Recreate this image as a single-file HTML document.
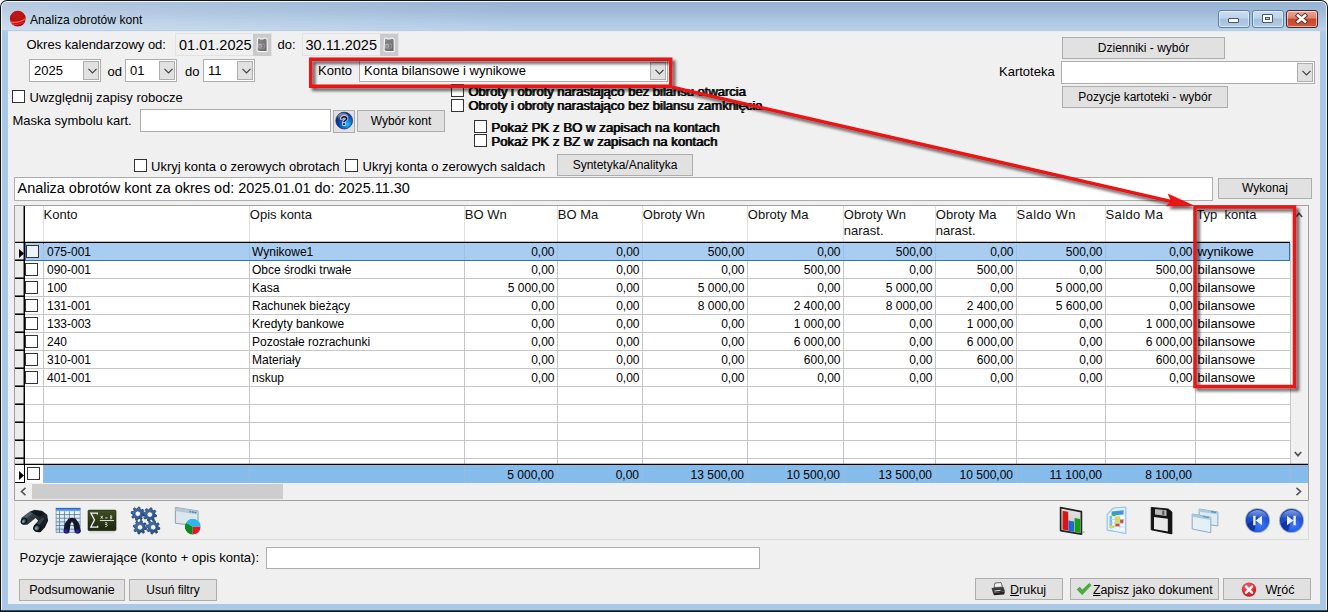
<!DOCTYPE html>
<html><head><meta charset="utf-8"><title>Analiza obrotów kont</title>
<style>
html,body{margin:0;padding:0;background:#fff;}
body{width:1328px;height:612px;position:relative;overflow:hidden;font-family:"Liberation Sans",sans-serif;font-size:13px;color:#000;}
div{position:absolute;box-sizing:border-box;}
.t{white-space:nowrap;}
.btn{background:#e1e1e1;border:1px solid #adadad;text-align:center;white-space:nowrap;color:#000;}
.cb{background:#fff;border:1px solid #333;}
.combo{background:#fff;border:1px solid #adadad;white-space:nowrap;}
.dd{background:#e1e1e1;border:1px solid #adadad;}
.inp{background:#fff;border:1px solid #adadad;}
.bold{text-shadow:0.7px 0 0 #000;}
</style></head><body>

<div style="left:0;top:0;width:1328px;height:612px;background:#141414;border-radius:7px 7px 0 0;"></div>
<div style="left:1px;top:1px;width:1326px;height:610px;background:#f2f7fc;border-radius:6px 6px 0 0;"></div>
<div style="left:2px;top:2px;width:1324px;height:608px;border-radius:5px 5px 0 0;background:linear-gradient(to bottom,#97b3d3 0px,#9ebad8 9px,#adc7e3 19px,#b8d0e8 27px,#bcd0e4 28px,#aac9e9 31px,#aac9e9 100%);"></div>
<div style="left:2px;top:2px;width:520px;height:28px;border-radius:5px 0 0 0;background:linear-gradient(to right,rgba(255,255,255,.30) 0px,rgba(255,255,255,.22) 120px,rgba(255,255,255,0) 520px);"></div>
<div style="left:1px;top:610px;width:1326px;height:1px;background:#2c5566;"></div>
<div style="left:8px;top:31px;width:1312px;height:573px;background:#f0f0f0;border-top:1px solid #e4eef8;"></div>
<svg style="position:absolute;left:9px;top:10px" width="18" height="18" viewBox="0 0 18 18"><defs><radialGradient id="rg" cx="45%" cy="30%" r="75%"><stop offset="0" stop-color="#c81515"/><stop offset="1" stop-color="#a80d0d"/></radialGradient></defs><circle cx="8.8" cy="8.6" r="7.9" fill="url(#rg)"/><path d="M1.6 11.2 C5 12.2 11 11.6 16.4 8.2 L16.6 9.6 C12 12.6 6 13.8 2.4 13.2 Z" fill="#ff5a5a"/><path d="M2.8 13.6 C6 14.4 11 13.6 15.2 11.4 L14.4 12.8 C11 14.8 7 15.4 4.2 15 Z" fill="#e33" opacity=".8"/></svg>
<div class="t" style="left:30px;top:14.05px;font-size:12.1px;line-height:13.90px;color:#000;">Analiza obrotów kont</div>
<div style="left:1218px;top:10px;width:32px;height:18px;border:1px solid #5b7fa6;border-radius:3px;background:linear-gradient(to bottom,#cbddf0 0%,#bdd2e9 45%,#a4bfdc 50%,#b4cce6 100%);box-shadow:inset 0 0 0 1px rgba(255,255,255,.55)"></div>
<div style="left:1252px;top:10px;width:32px;height:18px;border:1px solid #5b7fa6;border-radius:3px;background:linear-gradient(to bottom,#cbddf0 0%,#bdd2e9 45%,#a4bfdc 50%,#b4cce6 100%);box-shadow:inset 0 0 0 1px rgba(255,255,255,.55)"></div>
<div style="left:1286px;top:10px;width:32px;height:18px;border:1px solid #4d2423;border-radius:3px;background:linear-gradient(to bottom,#e9a99b 0%,#dd8270 45%,#c9452b 50%,#cf5a3f 100%);box-shadow:inset 0 0 0 1px rgba(255,255,255,.55)"></div>
<div style="left:1228px;top:18px;width:11px;height:5px;background:#fff;border:1px solid #44566b;border-radius:1px"></div>
<div style="left:1262px;top:14px;width:11px;height:9px;background:#fff;border:1px solid #44566b;border-radius:1px"></div>
<div style="left:1265px;top:17px;width:5px;height:3px;background:#b4cce6;border:1px solid #44566b"></div>
<svg style="position:absolute;left:1295px;top:13px" width="13" height="11" viewBox="0 0 13 11"><path d="M3 2.6 L10 8.6 M10 2.6 L3 8.6" stroke="#53302a" stroke-width="4.4" stroke-linecap="square"/><path d="M3 2.6 L10 8.6 M10 2.6 L3 8.6" stroke="#fff" stroke-width="2.6" stroke-linecap="square"/></svg>
<div class="t" style="left:26.5px;top:37.93px;font-size:13px;line-height:14.94px;color:#000;">Okres kalendarzowy od:</div>
<div style="left:175px;top:33px;width:97px;height:23px;border:1px solid #e2e2e2;background:#f0f0f0;"></div>
<div class="t" style="left:179px;top:37.18px;font-size:14.5px;line-height:16.66px;color:#000;">01.01.2025</div>
<div style="left:253px;top:34px;width:18px;height:22px;background:#cacaca;"><svg width="18" height="22" viewBox="0 0 18 22" style="position:absolute;left:0;top:0"><defs><linearGradient id="cg253" x1="0" y1="0" x2="1" y2="1"><stop offset="0" stop-color="#8c8c8c"/><stop offset="1" stop-color="#666"/></linearGradient></defs><path d="M4.6 4.4 L6.6 4 L7.4 4.8 L10.2 4.8 L11 4 L13 4.4 L14.2 5.6 L14.2 17.6 L6.2 17.6 L4 16.6 Z" fill="url(#cg253)" stroke="#f3f3f3" stroke-width="1.2" stroke-linejoin="round"/><rect x="5.4" y="9.8" width="6" height="4.6" fill="#b9b9b9"/><path d="M7 10.8 v3 M8.6 10.8 h1.8 v1.2 h-1.6 M8.6 13.6 h1.8 v-1.4" stroke="#555" stroke-width=".8" fill="none"/></svg></div>
<div class="t" style="left:277.5px;top:37.93px;font-size:13px;line-height:14.94px;color:#000;">do:</div>
<div style="left:302px;top:33px;width:97px;height:23px;border:1px solid #e2e2e2;background:#f0f0f0;"></div>
<div class="t" style="left:305.5px;top:37.18px;font-size:14.5px;line-height:16.66px;color:#000;">30.11.2025</div>
<div style="left:380px;top:34px;width:18px;height:22px;background:#cacaca;"><svg width="18" height="22" viewBox="0 0 18 22" style="position:absolute;left:0;top:0"><defs><linearGradient id="cg380" x1="0" y1="0" x2="1" y2="1"><stop offset="0" stop-color="#8c8c8c"/><stop offset="1" stop-color="#666"/></linearGradient></defs><path d="M4.6 4.4 L6.6 4 L7.4 4.8 L10.2 4.8 L11 4 L13 4.4 L14.2 5.6 L14.2 17.6 L6.2 17.6 L4 16.6 Z" fill="url(#cg380)" stroke="#f3f3f3" stroke-width="1.2" stroke-linejoin="round"/><rect x="5.4" y="9.8" width="6" height="4.6" fill="#b9b9b9"/><path d="M7 10.8 v3 M8.6 10.8 h1.8 v1.2 h-1.6 M8.6 13.6 h1.8 v-1.4" stroke="#555" stroke-width=".8" fill="none"/></svg></div>
<div class="combo" style="left:29px;top:59px;width:72px;height:23px"><span style="position:absolute;left:4px;top:0px;line-height:21px;font-size:13px">2025</span><div class="dd" style="right:1px;top:1px;width:16px;height:19px"><svg width="9" height="6" viewBox="0 0 9 6" style="position:absolute;left:3.5px;top:6px"><path d="M0.5 0.8 L4.5 4.8 L8.5 0.8" fill="none" stroke="#404040" stroke-width="1.2"/></svg></div></div>
<div class="t" style="left:107.5px;top:64.93px;font-size:13px;line-height:14.94px;color:#000;">od</div>
<div class="combo" style="left:125px;top:59px;width:52px;height:23px"><span style="position:absolute;left:4px;top:0px;line-height:21px;font-size:13px">01</span><div class="dd" style="right:1px;top:1px;width:16px;height:19px"><svg width="9" height="6" viewBox="0 0 9 6" style="position:absolute;left:3.5px;top:6px"><path d="M0.5 0.8 L4.5 4.8 L8.5 0.8" fill="none" stroke="#404040" stroke-width="1.2"/></svg></div></div>
<div class="t" style="left:185px;top:64.93px;font-size:13px;line-height:14.94px;color:#000;">do</div>
<div class="combo" style="left:203px;top:59px;width:52px;height:23px"><span style="position:absolute;left:4px;top:0px;line-height:21px;font-size:13px">11</span><div class="dd" style="right:1px;top:1px;width:16px;height:19px"><svg width="9" height="6" viewBox="0 0 9 6" style="position:absolute;left:3.5px;top:6px"><path d="M0.5 0.8 L4.5 4.8 L8.5 0.8" fill="none" stroke="#404040" stroke-width="1.2"/></svg></div></div>
<div class="t" style="left:318px;top:63.53px;font-size:13px;line-height:14.94px;color:#000;">Konto</div>
<div class="combo" style="left:359px;top:60px;width:309px;height:22px"><span style="position:absolute;left:4px;top:0px;line-height:20px;font-size:13px">Konta bilansowe i wynikowe</span><div class="dd" style="right:1px;top:1px;width:16px;height:18px"><svg width="9" height="6" viewBox="0 0 9 6" style="position:absolute;left:3.5px;top:6px"><path d="M0.5 0.8 L4.5 4.8 L8.5 0.8" fill="none" stroke="#404040" stroke-width="1.2"/></svg></div></div>
<div class="btn" style="left:1062px;top:37px;width:163px;height:22px;font-size:12px;line-height:20px;letter-spacing:0px">Dzienniki - wybór</div>
<div class="t" style="left:999px;top:64.93px;font-size:13px;line-height:14.94px;color:#000;">Kartoteka</div>
<div class="combo" style="left:1061px;top:61px;width:254px;height:23px"><span style="position:absolute;left:5px;top:0px;line-height:21px;font-size:13px"></span><div class="dd" style="right:1px;top:1px;width:16px;height:19px"><svg width="9" height="6" viewBox="0 0 9 6" style="position:absolute;left:3.5px;top:6px"><path d="M0.5 0.8 L4.5 4.8 L8.5 0.8" fill="none" stroke="#404040" stroke-width="1.2"/></svg></div></div>
<div class="btn" style="left:1062px;top:86px;width:166px;height:22px;font-size:12px;line-height:20px;letter-spacing:0px">Pozycje kartoteki - wybór</div>
<div class="cb" style="left:12px;top:90px;width:13px;height:13px"></div>
<div class="t" style="left:29.5px;top:90.93px;font-size:13px;line-height:14.94px;color:#000;">Uwzględnij zapisy robocze</div>
<div class="t" style="left:12.5px;top:113.93px;font-size:13px;line-height:14.94px;color:#000;">Maska symbolu kart.</div>
<div class="inp" style="left:140px;top:109px;width:191px;height:23px;"></div>
<div style="left:333px;top:110px;width:22px;height:23px;background:#e1e1e1;border:1px solid #adadad;"><svg width="20" height="21" viewBox="0 0 20 21" style="position:absolute;left:0;top:0"><defs><radialGradient id="hg" cx="68%" cy="72%" r="70%"><stop offset="0" stop-color="#22c4f4"/><stop offset=".35" stop-color="#1478d8"/><stop offset=".75" stop-color="#0b3ca4"/><stop offset="1" stop-color="#0a2a78"/></radialGradient><linearGradient id="hl" x1="0" y1="0" x2="0" y2="1"><stop offset="0" stop-color="#fff" stop-opacity=".55"/><stop offset="1" stop-color="#fff" stop-opacity="0"/></linearGradient></defs><circle cx="10.2" cy="9.6" r="8.4" fill="url(#hg)" stroke="#10245c" stroke-width=".7"/><ellipse cx="9" cy="6" rx="5.6" ry="3.8" fill="url(#hl)"/><text x="10.3" y="14.2" font-family="Liberation Sans" font-weight="bold" font-size="13" text-anchor="middle" fill="#fff" stroke="#fff" stroke-width="1.6" opacity=".8">?</text><text x="10.3" y="14.2" font-family="Liberation Sans" font-weight="bold" font-size="13" text-anchor="middle" fill="#0c0c1c">?</text></svg></div>
<div class="btn" style="left:357px;top:110px;width:88px;height:22px;font-size:12px;line-height:20px;letter-spacing:0px">Wybór kont</div>
<div class="cb" style="left:451px;top:84px;width:13px;height:13px"></div>
<div class="t" style="left:468px;top:84.93px;font-size:13px;line-height:14.94px;color:#000;text-shadow:1px 0 0 #000;">Obroty i obroty narastająco bez bilansu otwarcia</div>
<div class="cb" style="left:451px;top:99px;width:13px;height:13px"></div>
<div class="t" style="left:468px;top:99.43px;font-size:13px;line-height:14.94px;color:#000;text-shadow:1px 0 0 #000;">Obroty i obroty narastająco bez bilansu zamknięcia</div>
<div class="cb" style="left:474px;top:120px;width:13px;height:13px"></div>
<div class="t" style="left:491px;top:120.93px;font-size:13px;line-height:14.94px;color:#000;text-shadow:1px 0 0 #000;letter-spacing:.1px;">Pokaż PK z BO w zapisach na kontach</div>
<div class="cb" style="left:474px;top:134px;width:13px;height:13px"></div>
<div class="t" style="left:491px;top:134.93px;font-size:13px;line-height:14.94px;color:#000;text-shadow:1px 0 0 #000;letter-spacing:.1px;">Pokaż PK z BZ w zapisach na kontach</div>
<div class="cb" style="left:134px;top:159px;width:13px;height:13px"></div>
<div class="t" style="left:151px;top:159.93px;font-size:13px;line-height:14.94px;color:#000;">Ukryj konta o zerowych obrotach</div>
<div class="cb" style="left:345px;top:159px;width:13px;height:13px"></div>
<div class="t" style="left:362.5px;top:159.93px;font-size:13px;line-height:14.94px;color:#000;">Ukryj konta o zerowych saldach</div>
<div class="btn" style="left:557px;top:154px;width:136px;height:22px;font-size:12px;line-height:20px;letter-spacing:0px">Syntetyka/Analityka</div>
<div class="inp" style="left:14px;top:177px;width:1199px;height:24px;"></div>
<div class="t" style="left:17.5px;top:180.12px;font-size:14.45px;line-height:16.60px;color:#000;">Analiza obrotów kont za okres od: 2025.01.01 do: 2025.11.30</div>
<div class="btn" style="left:1218px;top:178px;width:94px;height:21px;font-size:12px;line-height:19px;letter-spacing:0px">Wykonaj</div>
<div style="left:14px;top:205px;width:1295px;height:296px;background:#fff;border:1px solid #a0a0a0;"></div>
<div style="left:15px;top:206px;width:9px;height:258px;background:#ececec;"></div>
<div style="left:43px;top:206px;width:1px;height:36px;background:#e0e0e0;"></div>
<div style="left:249px;top:206px;width:1px;height:36px;background:#e0e0e0;"></div>
<div style="left:464px;top:206px;width:1px;height:36px;background:#e0e0e0;"></div>
<div style="left:557px;top:206px;width:1px;height:36px;background:#e0e0e0;"></div>
<div style="left:642px;top:206px;width:1px;height:36px;background:#e0e0e0;"></div>
<div style="left:747px;top:206px;width:1px;height:36px;background:#e0e0e0;"></div>
<div style="left:843px;top:206px;width:1px;height:36px;background:#e0e0e0;"></div>
<div style="left:935px;top:206px;width:1px;height:36px;background:#e0e0e0;"></div>
<div style="left:1016px;top:206px;width:1px;height:36px;background:#e0e0e0;"></div>
<div style="left:1105px;top:206px;width:1px;height:36px;background:#e0e0e0;"></div>
<div style="left:1195px;top:206px;width:1px;height:36px;background:#e0e0e0;"></div>
<div style="left:43px;top:243px;width:1px;height:221px;background:#c6c6c6;"></div>
<div style="left:249px;top:243px;width:1px;height:221px;background:#c6c6c6;"></div>
<div style="left:464px;top:243px;width:1px;height:221px;background:#c6c6c6;"></div>
<div style="left:557px;top:243px;width:1px;height:221px;background:#c6c6c6;"></div>
<div style="left:642px;top:243px;width:1px;height:221px;background:#c6c6c6;"></div>
<div style="left:747px;top:243px;width:1px;height:221px;background:#c6c6c6;"></div>
<div style="left:843px;top:243px;width:1px;height:221px;background:#c6c6c6;"></div>
<div style="left:935px;top:243px;width:1px;height:221px;background:#c6c6c6;"></div>
<div style="left:1016px;top:243px;width:1px;height:221px;background:#c6c6c6;"></div>
<div style="left:1105px;top:243px;width:1px;height:221px;background:#c6c6c6;"></div>
<div style="left:1195px;top:243px;width:1px;height:221px;background:#c6c6c6;"></div>
<div style="left:1290px;top:243px;width:1px;height:221px;background:#c6c6c6;"></div>
<div style="left:1291px;top:206px;width:17px;height:258px;background:#f0f0f0;"></div>
<div style="left:25px;top:260px;width:1265px;height:1px;background:#c6c6c6;"></div>
<div style="left:15px;top:260px;width:10px;height:1px;background:#000;box-shadow:0 -0.5px 0 #555;"></div>
<div style="left:15px;top:259px;width:10px;height:1px;background:rgba(0,0,0,.35);"></div>
<div style="left:25px;top:278px;width:1265px;height:1px;background:#c6c6c6;"></div>
<div style="left:15px;top:278px;width:10px;height:1px;background:#000;box-shadow:0 -0.5px 0 #555;"></div>
<div style="left:15px;top:277px;width:10px;height:1px;background:rgba(0,0,0,.35);"></div>
<div style="left:25px;top:296px;width:1265px;height:1px;background:#c6c6c6;"></div>
<div style="left:15px;top:296px;width:10px;height:1px;background:#000;box-shadow:0 -0.5px 0 #555;"></div>
<div style="left:15px;top:295px;width:10px;height:1px;background:rgba(0,0,0,.35);"></div>
<div style="left:25px;top:314px;width:1265px;height:1px;background:#c6c6c6;"></div>
<div style="left:15px;top:314px;width:10px;height:1px;background:#000;box-shadow:0 -0.5px 0 #555;"></div>
<div style="left:15px;top:313px;width:10px;height:1px;background:rgba(0,0,0,.35);"></div>
<div style="left:25px;top:332px;width:1265px;height:1px;background:#c6c6c6;"></div>
<div style="left:15px;top:332px;width:10px;height:1px;background:#000;box-shadow:0 -0.5px 0 #555;"></div>
<div style="left:15px;top:331px;width:10px;height:1px;background:rgba(0,0,0,.35);"></div>
<div style="left:25px;top:350px;width:1265px;height:1px;background:#c6c6c6;"></div>
<div style="left:15px;top:350px;width:10px;height:1px;background:#000;box-shadow:0 -0.5px 0 #555;"></div>
<div style="left:15px;top:349px;width:10px;height:1px;background:rgba(0,0,0,.35);"></div>
<div style="left:25px;top:368px;width:1265px;height:1px;background:#c6c6c6;"></div>
<div style="left:15px;top:368px;width:10px;height:1px;background:#000;box-shadow:0 -0.5px 0 #555;"></div>
<div style="left:15px;top:367px;width:10px;height:1px;background:rgba(0,0,0,.35);"></div>
<div style="left:25px;top:386px;width:1265px;height:1px;background:#c6c6c6;"></div>
<div style="left:15px;top:386px;width:10px;height:1px;background:#000;box-shadow:0 -0.5px 0 #555;"></div>
<div style="left:15px;top:385px;width:10px;height:1px;background:rgba(0,0,0,.35);"></div>
<div style="left:25px;top:404px;width:1265px;height:1px;background:#c6c6c6;"></div>
<div style="left:15px;top:404px;width:10px;height:1px;background:#000;box-shadow:0 -0.5px 0 #555;"></div>
<div style="left:15px;top:403px;width:10px;height:1px;background:rgba(0,0,0,.35);"></div>
<div style="left:25px;top:422px;width:1265px;height:1px;background:#c6c6c6;"></div>
<div style="left:15px;top:422px;width:10px;height:1px;background:#000;box-shadow:0 -0.5px 0 #555;"></div>
<div style="left:15px;top:421px;width:10px;height:1px;background:rgba(0,0,0,.35);"></div>
<div style="left:25px;top:440px;width:1265px;height:1px;background:#c6c6c6;"></div>
<div style="left:15px;top:440px;width:10px;height:1px;background:#000;box-shadow:0 -0.5px 0 #555;"></div>
<div style="left:15px;top:439px;width:10px;height:1px;background:rgba(0,0,0,.35);"></div>
<div style="left:25px;top:458px;width:1265px;height:1px;background:#c6c6c6;"></div>
<div style="left:15px;top:458px;width:10px;height:1px;background:#000;box-shadow:0 -0.5px 0 #555;"></div>
<div style="left:15px;top:457px;width:10px;height:1px;background:rgba(0,0,0,.35);"></div>
<div style="left:23px;top:206px;width:1px;height:258px;background:rgba(0,0,0,.45);"></div>
<div style="left:24px;top:206px;width:1px;height:258px;background:#000;"></div>
<div style="left:15px;top:241px;width:1275px;height:1px;background:rgba(0,0,0,.25);"></div>
<div style="left:15px;top:242px;width:1275px;height:1px;background:#000;"></div>
<div class="t" style="left:43.6px;top:207px;font-size:13px;line-height:16px;color:#111;">Konto</div>
<div class="t" style="left:249.8px;top:207px;font-size:13px;line-height:16px;color:#111;">Opis konta</div>
<div class="t" style="left:464.8px;top:207px;font-size:13px;line-height:16px;color:#111;">BO Wn</div>
<div class="t" style="left:557.8px;top:207px;font-size:13px;line-height:16px;color:#111;">BO Ma</div>
<div class="t" style="left:642.8px;top:207px;font-size:13px;line-height:16px;color:#111;">Obroty Wn</div>
<div class="t" style="left:747.8px;top:207px;font-size:13px;line-height:16px;color:#111;">Obroty Ma</div>
<div class="t" style="left:843.8px;top:207px;font-size:13px;line-height:16px;color:#111;">Obroty Wn<br>narast.</div>
<div class="t" style="left:935.8px;top:207px;font-size:13px;line-height:16px;color:#111;">Obroty Ma<br>narast.</div>
<div class="t" style="left:1016.6px;top:207px;font-size:13px;line-height:16px;color:#111;"><span style="letter-spacing:.35px">Saldo Wn</span></div>
<div class="t" style="left:1105.6px;top:207px;font-size:13px;line-height:16px;color:#111;"><span style="letter-spacing:.35px">Saldo Ma</span></div>
<div class="t" style="left:1196.4px;top:207px;font-size:13px;line-height:16px;color:#111;">Typ&nbsp; konta</div>
<div style="left:25px;top:243px;width:1265px;height:18px;background:#a8cdf0;border-bottom:1px solid #2f72bb;border-right:1px solid #2f72bb;"></div>
<div style="left:25px;top:243px;width:19px;height:18px;border:1px solid #2f72bb;border-top:none;"></div>
<div style="left:43px;top:244px;width:1px;height:16px;background:#98c2ea;"></div>
<div style="left:249px;top:244px;width:1px;height:16px;background:#98c2ea;"></div>
<div style="left:464px;top:244px;width:1px;height:16px;background:#98c2ea;"></div>
<div style="left:557px;top:244px;width:1px;height:16px;background:#98c2ea;"></div>
<div style="left:642px;top:244px;width:1px;height:16px;background:#98c2ea;"></div>
<div style="left:747px;top:244px;width:1px;height:16px;background:#98c2ea;"></div>
<div style="left:843px;top:244px;width:1px;height:16px;background:#98c2ea;"></div>
<div style="left:935px;top:244px;width:1px;height:16px;background:#98c2ea;"></div>
<div style="left:1016px;top:244px;width:1px;height:16px;background:#98c2ea;"></div>
<div style="left:1105px;top:244px;width:1px;height:16px;background:#98c2ea;"></div>
<div style="left:1195px;top:244px;width:1px;height:16px;background:#98c2ea;"></div>
<div class="cb" style="left:26px;top:245px;width:13px;height:13px;background:#eaf2fb;"></div>
<div class="t" style="left:47px;top:245px;font-size:12px;line-height:14px;">075-001</div>
<div class="t" style="left:252px;top:245px;font-size:12px;line-height:14px;">Wynikowe1</div>
<div class="t" style="left:464px;width:90.5px;text-align:right;top:245px;font-size:12px;line-height:14px;">0,00</div>
<div class="t" style="left:557px;width:82.5px;text-align:right;top:245px;font-size:12px;line-height:14px;">0,00</div>
<div class="t" style="left:642px;width:102.5px;text-align:right;top:245px;font-size:12px;line-height:14px;">500,00</div>
<div class="t" style="left:747px;width:93.5px;text-align:right;top:245px;font-size:12px;line-height:14px;">0,00</div>
<div class="t" style="left:843px;width:89.5px;text-align:right;top:245px;font-size:12px;line-height:14px;">500,00</div>
<div class="t" style="left:935px;width:78.5px;text-align:right;top:245px;font-size:12px;line-height:14px;">0,00</div>
<div class="t" style="left:1016px;width:86.5px;text-align:right;top:245px;font-size:12px;line-height:14px;">500,00</div>
<div class="t" style="left:1105px;width:87.5px;text-align:right;top:245px;font-size:12px;line-height:14px;">0,00</div>
<div class="t" style="left:1197.5px;top:244px;font-size:13px;line-height:15px;">wynikowe</div>
<div class="cb" style="left:25px;top:263px;width:13px;height:13px;"></div>
<div class="t" style="left:47px;top:263px;font-size:12px;line-height:14px;">090-001</div>
<div class="t" style="left:252px;top:263px;font-size:12px;line-height:14px;">Obce środki trwałe</div>
<div class="t" style="left:464px;width:90.5px;text-align:right;top:263px;font-size:12px;line-height:14px;">0,00</div>
<div class="t" style="left:557px;width:82.5px;text-align:right;top:263px;font-size:12px;line-height:14px;">0,00</div>
<div class="t" style="left:642px;width:102.5px;text-align:right;top:263px;font-size:12px;line-height:14px;">0,00</div>
<div class="t" style="left:747px;width:93.5px;text-align:right;top:263px;font-size:12px;line-height:14px;">500,00</div>
<div class="t" style="left:843px;width:89.5px;text-align:right;top:263px;font-size:12px;line-height:14px;">0,00</div>
<div class="t" style="left:935px;width:78.5px;text-align:right;top:263px;font-size:12px;line-height:14px;">500,00</div>
<div class="t" style="left:1016px;width:86.5px;text-align:right;top:263px;font-size:12px;line-height:14px;">0,00</div>
<div class="t" style="left:1105px;width:87.5px;text-align:right;top:263px;font-size:12px;line-height:14px;">500,00</div>
<div class="t" style="left:1197.5px;top:262px;font-size:13px;line-height:15px;">bilansowe</div>
<div class="cb" style="left:25px;top:281px;width:13px;height:13px;"></div>
<div class="t" style="left:47px;top:281px;font-size:12px;line-height:14px;">100</div>
<div class="t" style="left:252px;top:281px;font-size:12px;line-height:14px;">Kasa</div>
<div class="t" style="left:464px;width:90.5px;text-align:right;top:281px;font-size:12px;line-height:14px;">5 000,00</div>
<div class="t" style="left:557px;width:82.5px;text-align:right;top:281px;font-size:12px;line-height:14px;">0,00</div>
<div class="t" style="left:642px;width:102.5px;text-align:right;top:281px;font-size:12px;line-height:14px;">5 000,00</div>
<div class="t" style="left:747px;width:93.5px;text-align:right;top:281px;font-size:12px;line-height:14px;">0,00</div>
<div class="t" style="left:843px;width:89.5px;text-align:right;top:281px;font-size:12px;line-height:14px;">5 000,00</div>
<div class="t" style="left:935px;width:78.5px;text-align:right;top:281px;font-size:12px;line-height:14px;">0,00</div>
<div class="t" style="left:1016px;width:86.5px;text-align:right;top:281px;font-size:12px;line-height:14px;">5 000,00</div>
<div class="t" style="left:1105px;width:87.5px;text-align:right;top:281px;font-size:12px;line-height:14px;">0,00</div>
<div class="t" style="left:1197.5px;top:280px;font-size:13px;line-height:15px;">bilansowe</div>
<div class="cb" style="left:25px;top:299px;width:13px;height:13px;"></div>
<div class="t" style="left:47px;top:299px;font-size:12px;line-height:14px;">131-001</div>
<div class="t" style="left:252px;top:299px;font-size:12px;line-height:14px;">Rachunek bieżący</div>
<div class="t" style="left:464px;width:90.5px;text-align:right;top:299px;font-size:12px;line-height:14px;">0,00</div>
<div class="t" style="left:557px;width:82.5px;text-align:right;top:299px;font-size:12px;line-height:14px;">0,00</div>
<div class="t" style="left:642px;width:102.5px;text-align:right;top:299px;font-size:12px;line-height:14px;">8 000,00</div>
<div class="t" style="left:747px;width:93.5px;text-align:right;top:299px;font-size:12px;line-height:14px;">2 400,00</div>
<div class="t" style="left:843px;width:89.5px;text-align:right;top:299px;font-size:12px;line-height:14px;">8 000,00</div>
<div class="t" style="left:935px;width:78.5px;text-align:right;top:299px;font-size:12px;line-height:14px;">2 400,00</div>
<div class="t" style="left:1016px;width:86.5px;text-align:right;top:299px;font-size:12px;line-height:14px;">5 600,00</div>
<div class="t" style="left:1105px;width:87.5px;text-align:right;top:299px;font-size:12px;line-height:14px;">0,00</div>
<div class="t" style="left:1197.5px;top:298px;font-size:13px;line-height:15px;">bilansowe</div>
<div class="cb" style="left:25px;top:317px;width:13px;height:13px;"></div>
<div class="t" style="left:47px;top:317px;font-size:12px;line-height:14px;">133-003</div>
<div class="t" style="left:252px;top:317px;font-size:12px;line-height:14px;">Kredyty bankowe</div>
<div class="t" style="left:464px;width:90.5px;text-align:right;top:317px;font-size:12px;line-height:14px;">0,00</div>
<div class="t" style="left:557px;width:82.5px;text-align:right;top:317px;font-size:12px;line-height:14px;">0,00</div>
<div class="t" style="left:642px;width:102.5px;text-align:right;top:317px;font-size:12px;line-height:14px;">0,00</div>
<div class="t" style="left:747px;width:93.5px;text-align:right;top:317px;font-size:12px;line-height:14px;">1 000,00</div>
<div class="t" style="left:843px;width:89.5px;text-align:right;top:317px;font-size:12px;line-height:14px;">0,00</div>
<div class="t" style="left:935px;width:78.5px;text-align:right;top:317px;font-size:12px;line-height:14px;">1 000,00</div>
<div class="t" style="left:1016px;width:86.5px;text-align:right;top:317px;font-size:12px;line-height:14px;">0,00</div>
<div class="t" style="left:1105px;width:87.5px;text-align:right;top:317px;font-size:12px;line-height:14px;">1 000,00</div>
<div class="t" style="left:1197.5px;top:316px;font-size:13px;line-height:15px;">bilansowe</div>
<div class="cb" style="left:25px;top:335px;width:13px;height:13px;"></div>
<div class="t" style="left:47px;top:335px;font-size:12px;line-height:14px;">240</div>
<div class="t" style="left:252px;top:335px;font-size:12px;line-height:14px;">Pozostałe rozrachunki</div>
<div class="t" style="left:464px;width:90.5px;text-align:right;top:335px;font-size:12px;line-height:14px;">0,00</div>
<div class="t" style="left:557px;width:82.5px;text-align:right;top:335px;font-size:12px;line-height:14px;">0,00</div>
<div class="t" style="left:642px;width:102.5px;text-align:right;top:335px;font-size:12px;line-height:14px;">0,00</div>
<div class="t" style="left:747px;width:93.5px;text-align:right;top:335px;font-size:12px;line-height:14px;">6 000,00</div>
<div class="t" style="left:843px;width:89.5px;text-align:right;top:335px;font-size:12px;line-height:14px;">0,00</div>
<div class="t" style="left:935px;width:78.5px;text-align:right;top:335px;font-size:12px;line-height:14px;">6 000,00</div>
<div class="t" style="left:1016px;width:86.5px;text-align:right;top:335px;font-size:12px;line-height:14px;">0,00</div>
<div class="t" style="left:1105px;width:87.5px;text-align:right;top:335px;font-size:12px;line-height:14px;">6 000,00</div>
<div class="t" style="left:1197.5px;top:334px;font-size:13px;line-height:15px;">bilansowe</div>
<div class="cb" style="left:25px;top:353px;width:13px;height:13px;"></div>
<div class="t" style="left:47px;top:353px;font-size:12px;line-height:14px;">310-001</div>
<div class="t" style="left:252px;top:353px;font-size:12px;line-height:14px;">Materiały</div>
<div class="t" style="left:464px;width:90.5px;text-align:right;top:353px;font-size:12px;line-height:14px;">0,00</div>
<div class="t" style="left:557px;width:82.5px;text-align:right;top:353px;font-size:12px;line-height:14px;">0,00</div>
<div class="t" style="left:642px;width:102.5px;text-align:right;top:353px;font-size:12px;line-height:14px;">0,00</div>
<div class="t" style="left:747px;width:93.5px;text-align:right;top:353px;font-size:12px;line-height:14px;">600,00</div>
<div class="t" style="left:843px;width:89.5px;text-align:right;top:353px;font-size:12px;line-height:14px;">0,00</div>
<div class="t" style="left:935px;width:78.5px;text-align:right;top:353px;font-size:12px;line-height:14px;">600,00</div>
<div class="t" style="left:1016px;width:86.5px;text-align:right;top:353px;font-size:12px;line-height:14px;">0,00</div>
<div class="t" style="left:1105px;width:87.5px;text-align:right;top:353px;font-size:12px;line-height:14px;">600,00</div>
<div class="t" style="left:1197.5px;top:352px;font-size:13px;line-height:15px;">bilansowe</div>
<div class="cb" style="left:25px;top:371px;width:13px;height:13px;"></div>
<div class="t" style="left:47px;top:371px;font-size:12px;line-height:14px;">401-001</div>
<div class="t" style="left:252px;top:371px;font-size:12px;line-height:14px;">nskup</div>
<div class="t" style="left:464px;width:90.5px;text-align:right;top:371px;font-size:12px;line-height:14px;">0,00</div>
<div class="t" style="left:557px;width:82.5px;text-align:right;top:371px;font-size:12px;line-height:14px;">0,00</div>
<div class="t" style="left:642px;width:102.5px;text-align:right;top:371px;font-size:12px;line-height:14px;">0,00</div>
<div class="t" style="left:747px;width:93.5px;text-align:right;top:371px;font-size:12px;line-height:14px;">0,00</div>
<div class="t" style="left:843px;width:89.5px;text-align:right;top:371px;font-size:12px;line-height:14px;">0,00</div>
<div class="t" style="left:935px;width:78.5px;text-align:right;top:371px;font-size:12px;line-height:14px;">0,00</div>
<div class="t" style="left:1016px;width:86.5px;text-align:right;top:371px;font-size:12px;line-height:14px;">0,00</div>
<div class="t" style="left:1105px;width:87.5px;text-align:right;top:371px;font-size:12px;line-height:14px;">0,00</div>
<div class="t" style="left:1197.5px;top:370px;font-size:13px;line-height:15px;">bilansowe</div>
<svg style="position:absolute;left:19px;top:249px" width="5" height="9" viewBox="0 0 5 9"><path d="M0 0 L5 4.5 L0 9 Z" fill="#000"/></svg>
<div style="left:15px;top:463px;width:1293px;height:1px;background:rgba(0,0,0,.25);"></div>
<div style="left:15px;top:464px;width:1293px;height:1px;background:#000;"></div>
<div style="left:15px;top:465px;width:9px;height:17px;background:#fff;"></div>
<div style="left:25px;top:465px;width:18px;height:18px;background:#fff;"></div>
<div style="left:43px;top:465px;width:1265px;height:18px;background:#86bceb;"></div>
<div style="left:43px;top:465px;width:1px;height:18px;background:#9fb9d3;"></div>
<div style="left:249px;top:465px;width:1px;height:18px;background:#9fb9d3;"></div>
<div style="left:464px;top:465px;width:1px;height:18px;background:#9fb9d3;"></div>
<div style="left:557px;top:465px;width:1px;height:18px;background:#9fb9d3;"></div>
<div style="left:642px;top:465px;width:1px;height:18px;background:#9fb9d3;"></div>
<div style="left:747px;top:465px;width:1px;height:18px;background:#9fb9d3;"></div>
<div style="left:843px;top:465px;width:1px;height:18px;background:#9fb9d3;"></div>
<div style="left:935px;top:465px;width:1px;height:18px;background:#9fb9d3;"></div>
<div style="left:1016px;top:465px;width:1px;height:18px;background:#9fb9d3;"></div>
<div style="left:1105px;top:465px;width:1px;height:18px;background:#9fb9d3;"></div>
<div style="left:1195px;top:465px;width:1px;height:18px;background:#9fb9d3;"></div>
<div style="left:1290px;top:465px;width:1px;height:18px;background:#9fb9d3;"></div>
<div style="left:15px;top:482px;width:10px;height:1px;background:#000;"></div>
<div style="left:24px;top:465px;width:1px;height:18px;background:#000;"></div>
<div class="cb" style="left:27px;top:467px;width:13px;height:13px;"></div>
<svg style="position:absolute;left:19px;top:471px" width="5" height="9" viewBox="0 0 5 9"><path d="M0 0 L5 4.5 L0 9 Z" fill="#000"/></svg>
<div class="t" style="left:464px;width:90px;text-align:right;top:468px;font-size:12px;line-height:14px;">5 000,00</div>
<div class="t" style="left:557px;width:82px;text-align:right;top:468px;font-size:12px;line-height:14px;">0,00</div>
<div class="t" style="left:642px;width:102px;text-align:right;top:468px;font-size:12px;line-height:14px;">13 500,00</div>
<div class="t" style="left:747px;width:93px;text-align:right;top:468px;font-size:12px;line-height:14px;">10 500,00</div>
<div class="t" style="left:843px;width:89px;text-align:right;top:468px;font-size:12px;line-height:14px;">13 500,00</div>
<div class="t" style="left:935px;width:78px;text-align:right;top:468px;font-size:12px;line-height:14px;">10 500,00</div>
<div class="t" style="left:1016px;width:86px;text-align:right;top:468px;font-size:12px;line-height:14px;">11 100,00</div>
<div class="t" style="left:1105px;width:87px;text-align:right;top:468px;font-size:12px;line-height:14px;">8 100,00</div>
<div style="left:15px;top:483px;width:1293px;height:17px;background:#f0f0f0;"></div>
<div style="left:32px;top:484px;width:251px;height:15px;background:#cdcdcd;"></div>
<svg style="position:absolute;left:20px;top:487px" width="7" height="9" viewBox="0 0 7 9"><path d="M5.5 0.8 L1.5 4.5 L5.5 8.2" fill="none" stroke="#555" stroke-width="1.6"/></svg>
<svg style="position:absolute;left:1295px;top:487px" width="7" height="9" viewBox="0 0 7 9"><path d="M1.5 0.8 L5.5 4.5 L1.5 8.2" fill="none" stroke="#555" stroke-width="1.6"/></svg>
<svg style="position:absolute;left:1295px;top:212px" width="8" height="6" viewBox="0 0 8 6"><path d="M0.8 5 L4 1.4 L7.2 5" fill="none" stroke="#505050" stroke-width="1.7"/></svg>
<svg style="position:absolute;left:1294px;top:451px" width="8" height="6" viewBox="0 0 8 6"><path d="M0.8 1 L4 4.6 L7.2 1" fill="none" stroke="#505050" stroke-width="1.7"/></svg>
<div style="left:14px;top:500px;width:1295px;height:40px;border:1px solid #dadada;border-top:1px solid #a0a0a0;background:#f0f0f0;"></div>
<svg style="position:absolute;left:16px;top:504px" width="36" height="34" viewBox="0 0 648.0 612.0">
<defs>
<linearGradient id="bb1" x1="0" y1="0" x2="1" y2="1"><stop offset="0" stop-color="#56656f"/><stop offset=".5" stop-color="#232b33"/><stop offset="1" stop-color="#0a0d11"/></linearGradient>
<radialGradient id="bl1" cx="40%" cy="65%" r="70%"><stop offset="0" stop-color="#9dbac8"/><stop offset=".5" stop-color="#3f5c6a"/><stop offset="1" stop-color="#0c1318"/></radialGradient>
</defs>
<path d="M250 135 L335 105 L470 122 L562 192 L578 300 L520 425 L445 505 Q352 522 312 452 L322 388 L400 300 L352 252 L205 372 Q120 384 88 318 L98 248 Z" fill="url(#bb1)"/>
<path d="M258 140 L335 114 L455 130 L520 180 L430 230 L350 200 Z" fill="#0c1014" opacity=".85"/>
<path d="M120 240 L250 150 L300 170 L170 268 Z" fill="#5f727d" opacity=".55"/>
<path d="M350 380 L450 262 L520 250 L420 380 Z" fill="#51626c" opacity=".5"/>
<ellipse cx="143" cy="308" rx="52" ry="66" transform="rotate(38 143 308)" fill="#06090c"/>
<ellipse cx="146" cy="306" rx="36" ry="50" transform="rotate(38 146 306)" fill="url(#bl1)"/>
<ellipse cx="378" cy="432" rx="64" ry="70" transform="rotate(38 378 432)" fill="#06090c"/>
<ellipse cx="382" cy="430" rx="46" ry="52" transform="rotate(38 382 430)" fill="url(#bl1)"/>
</svg>
<svg style="position:absolute;left:14px;top:502px" width="110" height="38" viewBox="0 0 1327.7 458.7">
<defs>
<linearGradient id="bn" x1="0" y1="0" x2="1" y2="1"><stop offset="0" stop-color="#4a545e"/><stop offset=".45" stop-color="#1a1f26"/><stop offset="1" stop-color="#07090c"/></linearGradient>
<linearGradient id="th" x1="0" y1="0" x2="0" y2="1"><stop offset="0" stop-color="#1f5fc0"/><stop offset="1" stop-color="#86bbf0"/></linearGradient>
<linearGradient id="tb" x1="0" y1="0" x2="0" y2="1"><stop offset="0" stop-color="#f4f9fe"/><stop offset="1" stop-color="#c9dcee"/></linearGradient>
<linearGradient id="sg" x1="0" y1="0" x2="0" y2="1"><stop offset="0" stop-color="#414f28"/><stop offset=".5" stop-color="#2c3a18"/><stop offset="1" stop-color="#1c260e"/></linearGradient>
</defs>
<!-- table -->
<rect x="508" y="74" width="290" height="296" fill="url(#tb)" stroke="#4d76a8" stroke-width="7"/>
<rect x="505" y="72" width="296" height="40" fill="url(#th)"/>
<path d="M505 152H800M505 196H800M505 240H800M505 284H800M505 328H800M549 112V372M609 112V372M669 112V372M729 112V372" stroke="#587a9e" stroke-width="10"/>
<path d="M598 352 L612 262 L660 200 L700 190 L742 200 L788 262 L806 352 L790 378 L745 380 L728 330 L716 260 L700 236 L684 260 L672 330 L655 380 L612 378 Z" fill="#12182a"/>
<ellipse cx="630" cy="350" rx="30" ry="30" fill="#1b1566"/><ellipse cx="626" cy="352" rx="16" ry="16" fill="#3a1fb0"/>
<ellipse cx="772" cy="350" rx="30" ry="30" fill="#1b1566"/><ellipse cx="768" cy="352" rx="16" ry="16" fill="#3a1fb0"/>
<!-- sigma -->
<rect x="893" y="97" width="339" height="250" rx="14" fill="url(#sg)" stroke="#161e0a" stroke-width="6"/>
<path d="M1006 150 L1006 134 L928 134 L972 216 L926 304 L1010 304 L1010 286" fill="none" stroke="#f2f2ee" stroke-width="15"/>
<path d="M1036 224 H1206" stroke="#f2f2ee" stroke-width="11"/>
<path d="M1046 168 l26 34 m0 -34 l-26 34 M1100 192 h30 M1160 166 c30 0 30 16 0 18 c30 0 30 20 0 20" stroke="#f2f2ee" stroke-width="10" fill="none"/>
<path d="M1102 248 c30 0 30 20 0 22 c32 0 32 28 -2 28" stroke="#f2f2ee" stroke-width="10" fill="none"/>
<rect x="912" y="368" width="300" height="9" fill="#d2d2d2"/>
</svg>
<svg style="position:absolute;left:120px;top:502px" width="110" height="38" viewBox="0 0 1327.7 458.7"><defs><linearGradient id="gg" x1="0" y1="0" x2="1" y2="1"><stop offset="0" stop-color="#4f80ba"/><stop offset="1" stop-color="#1c4580"/></linearGradient></defs><path d="M296.7 148.6 L292.8 167.8 L269.0 169.6 L260.9 181.7 L268.2 204.4 L251.8 215.3 L233.7 199.7 L219.4 202.5 L208.4 223.7 L189.2 219.8 L187.4 196.0 L175.3 187.9 L152.6 195.2 L141.7 178.8 L157.3 160.7 L154.5 146.4 L133.3 135.4 L137.2 116.2 L161.0 114.4 L169.1 102.3 L161.8 79.6 L178.2 68.7 L196.3 84.3 L210.6 81.5 L221.6 60.3 L240.8 64.2 L242.6 88.0 L254.7 96.1 L277.4 88.8 L288.3 105.2 L272.7 123.3 L275.5 137.6Z" fill="url(#gg)" stroke="#173764" stroke-width="9" stroke-linejoin="round"/><circle cx="215" cy="142" r="32.8" fill="#eef4fa" stroke="#173764" stroke-width="7"/><path d="M441.7 158.6 L437.8 177.8 L414.0 179.6 L405.9 191.7 L413.2 214.4 L396.8 225.3 L378.7 209.7 L364.4 212.5 L353.4 233.7 L334.2 229.8 L332.4 206.0 L320.3 197.9 L297.6 205.2 L286.7 188.8 L302.3 170.7 L299.5 156.4 L278.3 145.4 L282.2 126.2 L306.0 124.4 L314.1 112.3 L306.8 89.6 L323.2 78.7 L341.3 94.3 L355.6 91.5 L366.6 70.3 L385.8 74.2 L387.6 98.0 L399.7 106.1 L422.4 98.8 L433.3 115.2 L417.7 133.3 L420.5 147.6Z" fill="url(#gg)" stroke="#173764" stroke-width="9" stroke-linejoin="round"/><circle cx="360" cy="152" r="32.8" fill="#eef4fa" stroke="#173764" stroke-width="7"/><path d="M323.7 311.6 L319.8 330.8 L296.0 332.6 L287.9 344.7 L295.2 367.4 L278.8 378.3 L260.7 362.7 L246.4 365.5 L235.4 386.7 L216.2 382.8 L214.4 359.0 L202.3 350.9 L179.6 358.2 L168.7 341.8 L184.3 323.7 L181.5 309.4 L160.3 298.4 L164.2 279.2 L188.0 277.4 L196.1 265.3 L188.8 242.6 L205.2 231.7 L223.3 247.3 L237.6 244.5 L248.6 223.3 L267.8 227.2 L269.6 251.0 L281.7 259.1 L304.4 251.8 L315.3 268.2 L299.7 286.3 L302.5 300.6Z" fill="url(#gg)" stroke="#173764" stroke-width="9" stroke-linejoin="round"/><circle cx="242" cy="305" r="32.8" fill="#eef4fa" stroke="#173764" stroke-width="7"/><path d="M481.7 311.6 L477.8 330.8 L454.0 332.6 L445.9 344.7 L453.2 367.4 L436.8 378.3 L418.7 362.7 L404.4 365.5 L393.4 386.7 L374.2 382.8 L372.4 359.0 L360.3 350.9 L337.6 358.2 L326.7 341.8 L342.3 323.7 L339.5 309.4 L318.3 298.4 L322.2 279.2 L346.0 277.4 L354.1 265.3 L346.8 242.6 L363.2 231.7 L381.3 247.3 L395.6 244.5 L406.6 223.3 L425.8 227.2 L427.6 251.0 L439.7 259.1 L462.4 251.8 L473.3 268.2 L457.7 286.3 L460.5 300.6Z" fill="url(#gg)" stroke="#173764" stroke-width="9" stroke-linejoin="round"/><circle cx="400" cy="305" r="32.8" fill="#eef4fa" stroke="#173764" stroke-width="7"/>
<path d="M668 66 L942 108 L942 290 L668 256 Z" fill="#dde6ec" stroke="#8097a8" stroke-width="11" stroke-linejoin="round"/>
<path d="M668 66 L942 108 L942 150 L668 110 Z" fill="#b3c8d6"/>
<path d="M840 116 l20 3 m10 1.5 l20 3 m10 1.5 l20 3" stroke="#3f78b0" stroke-width="16"/>
<circle cx="878" cy="298" r="102" fill="#fff" opacity=".75"/>
<path d="M878 298 L796 250 A95 95 0 0 1 973 298 Z" fill="#2fb5ef"/>
<path d="M878 298 L973 298 A95 95 0 0 1 878 393 Z" fill="#ee1522"/>
<path d="M878 298 L878 393 A95 95 0 0 1 796 250 Z" fill="#0b8a1d"/>
</svg>
<svg style="position:absolute;left:1059px;top:506px" width="26" height="30" viewBox="0 0 26 30">
<defs><linearGradient id="chb" x1="0" y1="0" x2="0" y2="1"><stop offset="0" stop-color="#e4e4e4"/><stop offset="1" stop-color="#c4c4c4"/></linearGradient></defs>
<path d="M1.6 1.6 L22.4 5.6 L22.4 28.2 L1.6 24.6 Z" fill="url(#chb)" stroke="#242424" stroke-width="1.7" stroke-linejoin="round"/>
<path d="M3.6 4.8 L9.2 5.8 L9.2 24.6 L3.6 23.6 Z" fill="#dd1414"/>
<path d="M9.4 14.6 L15 15.6 L15 25.8 L9.4 24.8 Z" fill="#2068d0"/>
<path d="M15.6 12 L21 13 L21 26.8 L15.6 25.8 Z" fill="#14a018"/>
<path d="M23 25.6 L27 25.6 L23 28Z" fill="#b0b0b0"/>
</svg>
<svg style="position:absolute;left:1106px;top:505px" width="22" height="30" viewBox="0 0 22 30">
<path d="M1.2 9.4 L7 3.2 L19.8 2 L19.8 28.5 L1.2 25.2 Z" fill="#e4f1fc" stroke="#93c4ee" stroke-width="1.2" stroke-linejoin="round"/>
<path d="M5.6 6.6 L17.6 5.2 L17.6 9.6 L5.6 10.6Z" fill="#3a98e0"/>
<path d="M3.6 11 L6.4 10.8 L6.4 23.6 L3.6 23 Z" fill="#7fb8ec"/>
<path d="M6.4 10.8 L17.6 10 L17.6 25.4 L6.4 23.6 Z" fill="#fff"/>
<rect x="9.2" y="11.4" width="4.6" height="6.4" fill="#e4de14"/>
<rect x="14" y="14" width="3.4" height="4.2" fill="#e0452a"/>
<rect x="9.2" y="18.4" width="4.6" height="3.4" fill="#e0452a"/>
<rect x="3.8" y="20.4" width="4.4" height="2.6" fill="#e4de14"/>
<rect x="6.6" y="8.6" width="3" height="2.6" fill="#46b04a"/>
<path d="M4 14.5 L17.5 14.4 M4 18 L17.5 18.4 M4 21 L17.5 22 M9 10.5 V24 M13.8 10.5 V24.6" stroke="#a9cdf0" stroke-width=".8"/>
</svg>
<svg style="position:absolute;left:1150px;top:506px" width="24" height="30" viewBox="0 0 24 30">
<path d="M1.2 1.4 L18.2 3 L21.9 6 L21.9 27.9 L1.2 23.8 Z" fill="#151515" stroke="#000" stroke-width=".8" stroke-linejoin="round"/>
<path d="M5 3 L16.5 4.2 L16.5 10 L5 8.6 Z" fill="#b9b9b9"/>
<path d="M12.2 4.6 L14.4 4.8 L14.4 9 L12.2 8.7Z" fill="#5a5a5a"/>
<path d="M4 11 L17.8 12.7 L17.8 25.6 L4 22.9 Z" fill="#e9e9e9"/>
</svg>
<svg style="position:absolute;left:1191px;top:507px" width="28" height="28" viewBox="0 0 28 28">
<path d="M8.2 2 L26.9 5 L26.9 19 L8.2 16 Z" fill="#dcebf4" stroke="#8eabbd" stroke-width="1"/>
<path d="M8.2 2 L26.9 5 L26.9 7.6 L8.2 4.6 Z" fill="#a9cbe0"/>
<path d="M1.2 7 L19.8 10.2 L19.8 25.7 L1.2 22 Z" fill="#e4eff6" stroke="#8eabbd" stroke-width="1"/>
<path d="M1.2 7 L19.8 10.2 L19.8 13 L1.2 9.8 Z" fill="#a9cbe0"/>
<path d="M12 9.5 l6 1" stroke="#4f8fc4" stroke-width="1.2"/><path d="M20 4.6 l5 .8" stroke="#4f8fc4" stroke-width="1.2"/>
</svg>
<svg style="position:absolute;left:1244px;top:507px" width="27" height="27" viewBox="0 0 27 27">
<defs><radialGradient id="nv1244" cx="60%" cy="70%" r="75%"><stop offset="0" stop-color="#3f78ff"/><stop offset=".6" stop-color="#1c4fd0"/><stop offset="1" stop-color="#123ba8"/></radialGradient>
<linearGradient id="nl1244" x1="0" y1="0" x2="0" y2="1"><stop offset="0" stop-color="#9bb3e6" stop-opacity=".85"/><stop offset="1" stop-color="#9bb3e6" stop-opacity="0"/></linearGradient></defs>
<circle cx="13.5" cy="13.5" r="12.6" fill="#aab4c4"/>
<circle cx="13.5" cy="13.5" r="11.6" fill="url(#nv1244)"/>
<path d="M3 17 A11.6 11.6 0 0 0 10 24.5 L14 10 Z" fill="#0a2a8c" opacity=".75"/>
<path d="M2.5 12 A11.2 11.2 0 0 1 24.5 12 Q13.5 7 2.5 12Z" fill="url(#nl1244)"/>
<path d="M9.2 8.8 H11.6 V18.2 H9.2 Z M18 8.8 L11.6 13.5 L18 18.2 Z" fill="#eef2fa"/></svg>
<svg style="position:absolute;left:1278px;top:507px" width="27" height="27" viewBox="0 0 27 27">
<defs><radialGradient id="nv1278" cx="60%" cy="70%" r="75%"><stop offset="0" stop-color="#3f78ff"/><stop offset=".6" stop-color="#1c4fd0"/><stop offset="1" stop-color="#123ba8"/></radialGradient>
<linearGradient id="nl1278" x1="0" y1="0" x2="0" y2="1"><stop offset="0" stop-color="#9bb3e6" stop-opacity=".85"/><stop offset="1" stop-color="#9bb3e6" stop-opacity="0"/></linearGradient></defs>
<circle cx="13.5" cy="13.5" r="12.6" fill="#aab4c4"/>
<circle cx="13.5" cy="13.5" r="11.6" fill="url(#nv1278)"/>
<path d="M3 17 A11.6 11.6 0 0 0 10 24.5 L14 10 Z" fill="#0a2a8c" opacity=".75"/>
<path d="M2.5 12 A11.2 11.2 0 0 1 24.5 12 Q13.5 7 2.5 12Z" fill="url(#nl1278)"/>
<path d="M17.8 8.8 H15.4 V18.2 H17.8 Z M9 8.8 L15.4 13.5 L9 18.2 Z" fill="#eef2fa"/></svg>
<div class="t" style="left:19.5px;top:550.93px;font-size:13px;line-height:14.94px;color:#000;">Pozycje zawierające (konto + opis konta):</div>
<div class="inp" style="left:266px;top:547px;width:494px;height:22px;"></div>
<div class="btn" style="left:19px;top:579px;width:106px;height:22px;font-size:12.5px;line-height:20px;letter-spacing:0px">Podsumowanie</div>
<div class="btn" style="left:129px;top:579px;width:88px;height:22px;font-size:12px;line-height:20px;letter-spacing:0px">Usuń filtry</div>
<div class="btn" style="left:975px;top:578px;width:88px;height:22px;"></div>
<svg style="position:absolute;left:990px;top:582px" width="16" height="14" viewBox="0 0 16 14"><path d="M5 1 L11 0.5 L12.5 5 L4 5.5Z" fill="#f2f2f2" stroke="#333" stroke-width=".7"/><path d="M1.5 6 L13.5 5 L15 9.5 L3 11 Z" fill="#3b3b3b"/><path d="M3 11 L15 9.5 L14 12.5 L4 13.2Z" fill="#222"/><path d="M4.5 9 l6 -.7" stroke="#ddd" stroke-width="1"/></svg>
<div class="t" style="left:1010px;top:582.89px;font-size:12.5px;line-height:14.36px;color:#000;"><u>D</u>rukuj</div>
<div class="btn" style="left:1070px;top:578px;width:149px;height:22px;"></div>
<svg style="position:absolute;left:1076px;top:582px" width="16" height="14" viewBox="0 0 16 14"><path d="M1.2 7.4 L3.8 5.2 L6.2 8.2 L13.2 1.6 L15 3.2 L6.2 12.6 Z" fill="#46b534" stroke="#2b8a22" stroke-width=".7"/></svg>
<div class="t" style="left:1093px;top:583.07px;font-size:12.3px;line-height:14.13px;color:#000;"><u>Z</u>apisz jako dokument</div>
<div class="btn" style="left:1223px;top:578px;width:88px;height:22px;"></div>
<svg style="position:absolute;left:1241px;top:582px" width="16" height="16" viewBox="0 0 16 16"><defs><radialGradient id="rx" cx="40%" cy="30%" r="75%"><stop offset="0" stop-color="#f2616b"/><stop offset="1" stop-color="#c8101e"/></radialGradient></defs><circle cx="8" cy="7.6" r="7.2" fill="url(#rx)"/><path d="M5 4.6 L11 10.6 M11 4.6 L5 10.6" stroke="#fff" stroke-width="2.4" stroke-linecap="round"/></svg>
<div class="t" style="left:1265.5px;top:582.89px;font-size:12.5px;line-height:14.36px;color:#000;">W<u>r</u>óć</div>
<svg style="position:absolute;left:0;top:0" width="1328" height="612" viewBox="0 0 1328 612">
<defs><filter id="ds" x="-5%" y="-5%" width="110%" height="110%"><feGaussianBlur in="SourceAlpha" stdDeviation="1.5"/><feOffset dx="3" dy="3"/><feComponentTransfer><feFuncA type="linear" slope=".62"/></feComponentTransfer><feMerge><feMergeNode/><feMergeNode in="SourceGraphic"/></feMerge></filter></defs>
<g filter="url(#ds)" fill="none" stroke="#e81212" stroke-width="3.5">
<rect x="310.7" y="59.2" width="360" height="27"/>
<rect x="1195" y="207" width="99.5" height="179.5"/>
<path d="M672 87.2 L1173 201.8" stroke-width="3.3"/>
<path d="M1193 205.6 L1168.3 194.2 L1171.5 201.2 L1166.5 205.8 Z" fill="#e81212" stroke-width=".8"/>
</g></svg>
</body></html>
